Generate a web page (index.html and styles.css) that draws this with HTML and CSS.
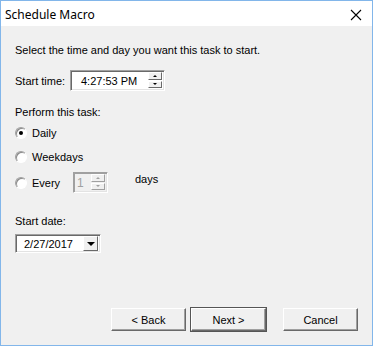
FILE: index.html
```html
<!DOCTYPE html>
<html lang="en">
<head>
    <meta charset="UTF-8">
    <title>Schedule Macro</title>
    <link rel="stylesheet" href="styles.css">
</head>
<body>
    <div class="window">
        <div class="titlebar">
            <span class="title">Schedule Macro</span>
            <svg class="close" width="12" height="12" viewBox="0 0 12 12">
                <path d="M1 1 L11 11 M11 1 L1 11" stroke="#000" stroke-width="1.1" fill="none"/>
            </svg>
        </div>
        <div class="content">
            <p class="intro">Select the time and day you want this task to start.</p>

            <div class="time-row">
                <span class="label">Start time:</span>
                <div class="field time-field">
                    <span class="value">4:27:53 PM</span>
                    <div class="spin">
                        <span class="spin-btn"><span class="arrow up"></span></span>
                        <span class="spin-btn"><span class="arrow down"></span></span>
                    </div>
                </div>
            </div>

            <p class="group-label">Perform this task:</p>

            <div class="radio-row daily">
                <span class="radio checked"></span>
                <span>Daily</span>
            </div>
            <div class="radio-row weekdays">
                <span class="radio"></span>
                <span>Weekdays</span>
            </div>
            <div class="radio-row every">
                <span class="radio"></span>
                <span class="every-text">Every</span>
                <div class="field count-field">
                    <span class="value">1</span>
                    <div class="spin">
                        <span class="spin-btn"><span class="arrow up"></span></span>
                        <span class="spin-btn"><span class="arrow down"></span></span>
                    </div>
                </div>
                <span class="days">days</span>
            </div>

            <p class="date-label">Start date:</p>
            <div class="field date-field">
                <span class="value">2/27/2017</span>
                <span class="drop"><span class="arrow down big"></span></span>
            </div>

            <div class="buttons">
                <button class="btn">&lt; Back</button>
                <button class="btn default">Next &gt;</button>
                <button class="btn cancel">Cancel</button>
            </div>
        </div>
    </div>
</body>
</html>
```

FILE: styles.css
```css
body {
    margin: 0;
    padding: 0;
    font-family: 'Liberation Sans', Arial, sans-serif;
    font-size: 11px;
    color: #000;
    background: #fff;
}

.window {
    width: 373px;
    height: 346px;
    box-sizing: border-box;
    border: 1px solid #82b6ea;
    display: flex;
    flex-direction: column;
}

.titlebar {
    height: 25px;
    background: #fff;
    display: flex;
    align-items: center;
    justify-content: space-between;
    padding: 0 10px 0 4px;
}

.title {
    font-family: 'Noto Sans', 'Liberation Sans', sans-serif;
    font-size: 12px;
    margin-top: 1px;
}

.close {
    margin-top: 2px;
}

.content {
    flex: 1;
    background: #f0f0f0;
    padding: 18px 0 0 14px;
    display: flex;
    flex-direction: column;
}

p {
    margin: 0;
    line-height: 13px;
}

.time-row {
    display: flex;
    align-items: center;
    margin-top: 13px;
    height: 21px;
}

.time-row .label {
    width: 55px;
}

/* sunken 3d box */
.field {
    background: #fff;
    border: 1px solid;
    border-color: #a0a0a0 #fff #fff #a0a0a0;
    box-shadow: inset 1px 1px #696969, inset -1px -1px #e3e3e3;
    box-sizing: border-box;
    display: flex;
    align-items: center;
}

.time-field {
    width: 95px;
    height: 21px;
    padding: 0 2px 0 10px;
    justify-content: space-between;
}

.spin {
    display: flex;
    flex-direction: column;
    height: 17px;
}

.spin-btn {
    width: 14px;
    height: 8px;
    background: #f0f0f0;
    border: 1px solid;
    border-color: #fff #696969 #696969 #fff;
    box-sizing: border-box;
    display: flex;
    align-items: center;
    justify-content: center;
    margin-bottom: 1px;
}

.arrow {
    width: 0;
    height: 0;
    border-left: 2px solid transparent;
    border-right: 2px solid transparent;
}

.arrow.up {
    border-bottom: 2px solid #000;
}

.arrow.down {
    border-top: 2px solid #000;
}

.arrow.big {
    border-left-width: 4px;
    border-right-width: 4px;
    border-top-width: 4px;
}

.group-label {
    margin-top: 15px;
}

.radio-row {
    display: flex;
    align-items: center;
    height: 13px;
}

.daily {
    margin-top: 7px;
}

.weekdays {
    margin-top: 11px;
}

.every {
    margin-top: 9px;
    height: 21px;
}

.radio {
    width: 12px;
    height: 12px;
    box-sizing: border-box;
    border-radius: 50%;
    border: 1px solid;
    border-color: #a0a0a0 #fff #fff #a0a0a0;
    box-shadow: inset 1px 1px #8a8a8a;
    background: #fff;
    margin-right: 5px;
    display: flex;
    align-items: center;
    justify-content: center;
}

.radio.checked::after {
    content: "";
    width: 4px;
    height: 4px;
    border-radius: 50%;
    background: #000;
}

.every-text {
    width: 41px;
}

.count-field {
    width: 35px;
    height: 21px;
    background: #f0f0f0;
    border-color: #a0a0a0 #fff #fff #a0a0a0;
    box-shadow: inset 1px 1px #a0a0a0, inset -1px -1px #e3e3e3;
    padding: 0 2px 0 3px;
    justify-content: space-between;
    color: #a0a0a0;
    font-size: 12px;
}

.count-field .spin-btn {
    border-color: #fff #a0a0a0 #a0a0a0 #fff;
}

.count-field .arrow.up {
    border-bottom-color: #a0a0a0;
}

.count-field .arrow.down {
    border-top-color: #a0a0a0;
}

.days {
    margin-left: 27px;
    margin-bottom: 7px;
}

.date-label {
    margin-top: 22px;
}

.date-field {
    margin-top: 6px;
    width: 86px;
    height: 19px;
    padding: 0 2px 0 8px;
    justify-content: space-between;
}

.drop {
    width: 15px;
    height: 15px;
    box-sizing: border-box;
    background: #f0f0f0;
    border: 1px solid;
    border-color: #fff #696969 #696969 #fff;
    display: flex;
    align-items: center;
    justify-content: center;
}

.buttons {
    margin-top: auto;
    margin-bottom: 14px;
    display: flex;
    padding-left: 96px;
}

.btn {
    font-family: 'Liberation Sans', Arial, sans-serif;
    font-size: 11px;
    width: 75px;
    height: 23px;
    padding: 0;
    background: #f0f0f0;
    border: 1px solid;
    border-color: #fff #696969 #696969 #fff;
    box-shadow: inset -1px -1px #a0a0a0;
    color: #000;
}

.btn.default {
    margin-left: 5px;
    outline: 1px solid #555;
    outline-offset: 0;
    border-color: #fff #696969 #696969 #fff;
}

.btn.cancel {
    margin-left: 17px;
}
```
